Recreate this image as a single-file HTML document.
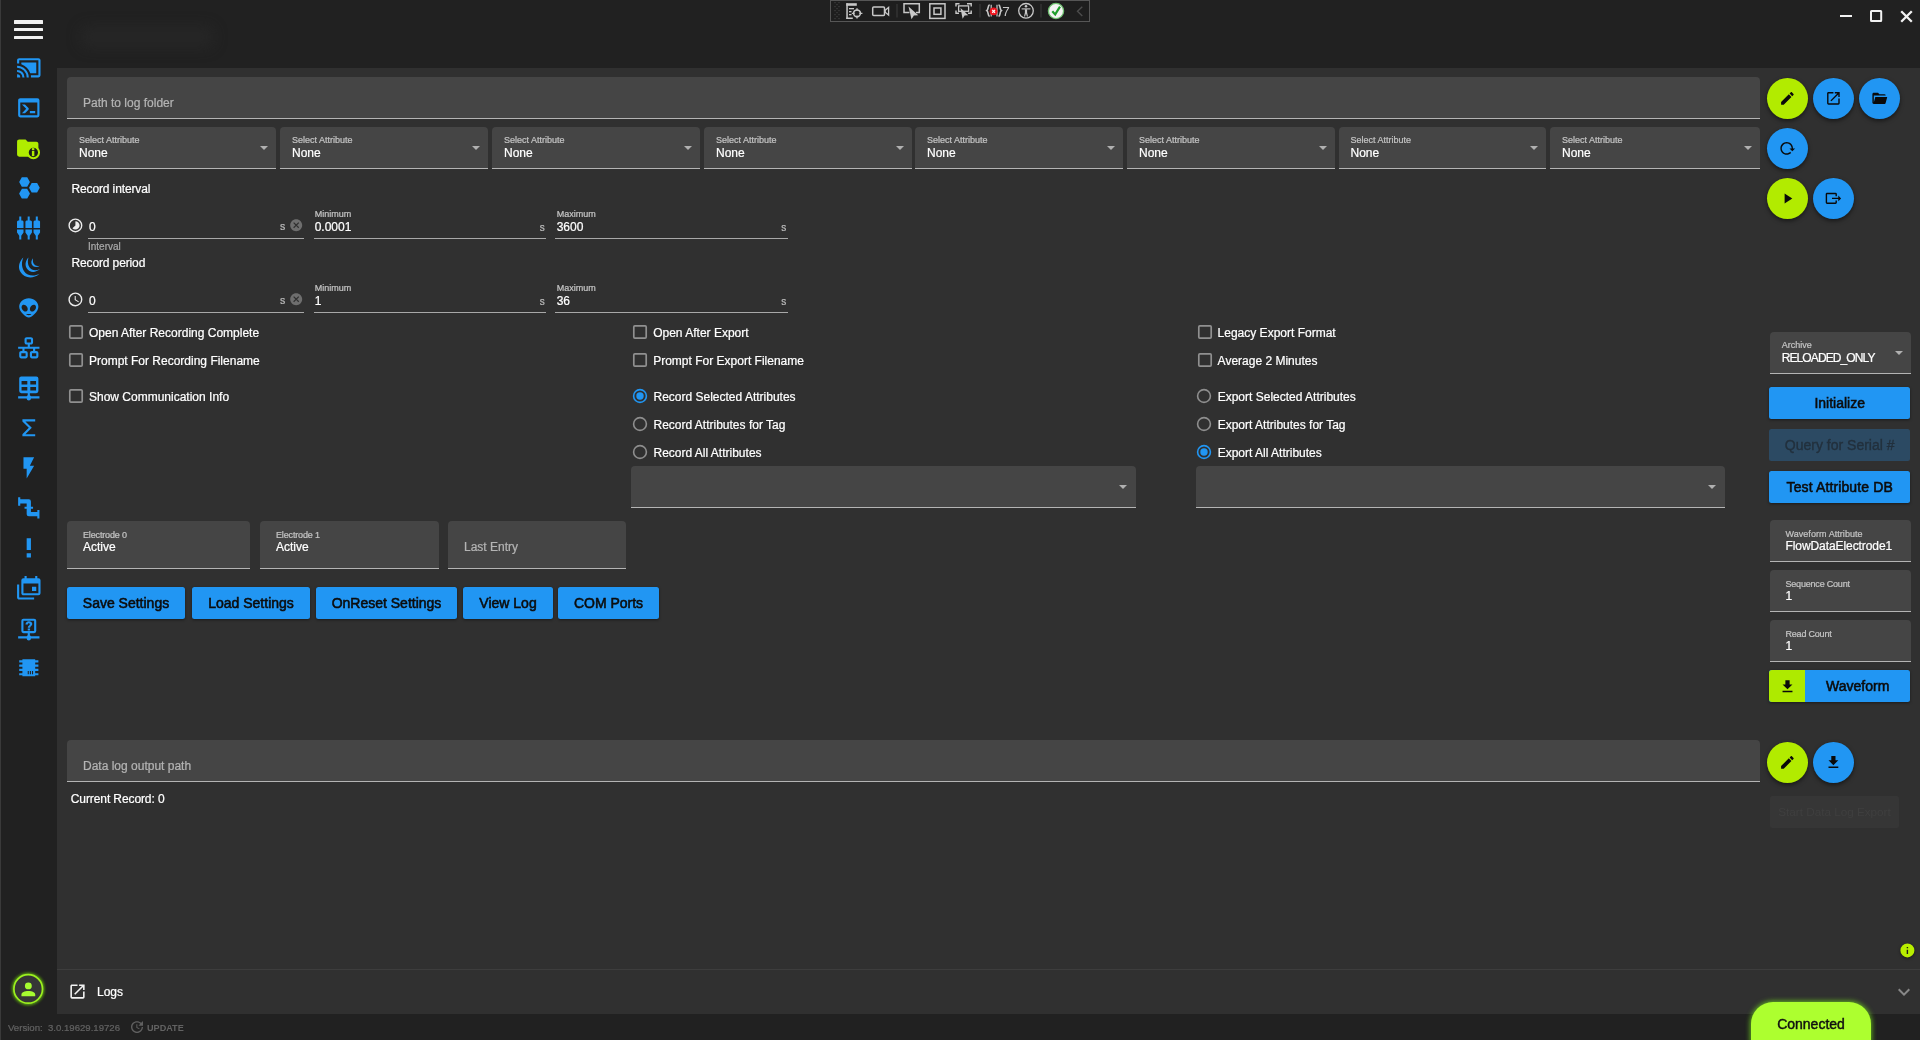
<!DOCTYPE html>
<html>
<head>
<meta charset="utf-8">
<title>Data Logger</title>
<style>
*{box-sizing:border-box;margin:0;padding:0}
html,body{width:1920px;height:1040px;overflow:hidden;background:#212121;font-family:"Liberation Sans",sans-serif;color:#fff}
body{position:relative}
.abs{position:absolute}
#leftstrip{position:absolute;left:0;top:0;width:1px;height:1040px;background:#3a3a3a}
#content{position:absolute;left:57px;top:68px;width:1863px;height:946px;background:#303030}
.fld{position:absolute;background:#454545;border-radius:4px 4px 0 0;border-bottom:1px solid #b4b4b4}
.t{position:absolute;white-space:nowrap;line-height:1;-webkit-text-stroke:0.22px currentColor}
.lbl{color:#c4c4c4;font-size:9px}
.val{color:#fff;font-size:12px}
.ph{color:#b4b4b4;font-size:12px}
.arrow{position:absolute;width:0;height:0;border-left:4px solid transparent;border-right:4px solid transparent;border-top:4px solid #b0b0b0}
.btn{position:absolute;background:#2196f3;border-radius:2.5px;color:#0c0c0c;font-size:14px;-webkit-text-stroke:0.55px #0c0c0c;text-align:center;height:32px;line-height:32px;box-shadow:0 1px 3px rgba(0,0,0,.45);white-space:nowrap}
.fab{position:absolute;width:41px;height:41px;border-radius:50%;box-shadow:0 2px 4px rgba(0,0,0,.5)}
.fab svg{position:absolute;left:12.1px;top:12.1px;width:16.8px;height:16.8px;fill:#0a0a0a}
.blue{background:#2196f3}
.lime{background:#b2eb00}
.cb{position:absolute;width:14px;height:14px;border:1.5px solid #8c8c8c;border-radius:2px}
.rb{position:absolute;width:14px;height:14px;border:1.5px solid #8c8c8c;border-radius:50%}
.rb.on{border-color:#2196f3}
.rb.on::after{content:"";position:absolute;left:2px;top:2px;width:7px;height:7px;border-radius:50%;background:#2196f3}
.ul{position:absolute;height:1px;background:#a8a8a8}
.sic{position:absolute;left:15.7px;width:25.6px;height:25.6px;fill:#2196f3}
</style>
</head>
<body>
<div id="wrap" style="position:absolute;left:0;top:0;width:1920px;height:1040px;will-change:transform;">
<div id="leftstrip"></div>
<div id="content"></div>
<!-- 10_sidebar.py -->
<div class="" style="position:absolute;left:14.3px;top:20.4px;width:28.4px;height:3.3px;background:#f0f0f0;border-radius:0.5px"></div>
<div class="" style="position:absolute;left:14.3px;top:28.2px;width:28.4px;height:3.3px;background:#f0f0f0;border-radius:0.5px"></div>
<div class="" style="position:absolute;left:14.3px;top:36.1px;width:28.4px;height:3.3px;background:#f0f0f0;border-radius:0.5px"></div>
<svg style="position:absolute;left:15.7px;top:55.2px;width:25.6px;height:25.6px" viewBox="0 0 24 24"><path fill="#2196f3" fill-rule="evenodd" d="M21,3H3C1.89,3 1,3.89 1,5V8H3V5H21V19H14V21H21A2,2 0 0,0 23,19V5C23,3.89 22.1,3 21,3M1,10V12A9,9 0 0,1 10,21H12C12,14.92 7.07,10 1,10M19,7H5V8.63C8.96,9.91 12.09,13.04 13.37,17H19M1,14V16A5,5 0 0,1 6,21H8A7,7 0 0,0 1,14M1,18V21H4A3,3 0 0,0 1,18Z"/></svg>
<svg style="position:absolute;left:15.7px;top:95.2px;width:25.6px;height:25.6px" viewBox="0 0 24 24"><path fill="#2196f3" fill-rule="evenodd" d="M20,19V7H4V19H20M20,3A2,2 0 0,1 22,5V19A2,2 0 0,1 20,21H4A2,2 0 0,1 2,19V5C2,3.89 2.9,3 4,3H20M13,17V15H18V17H13M9.58,13L5.57,9H8.4L11.7,12.3C12.09,12.69 12.09,13.33 11.7,13.72L8.42,17H5.59L9.58,13Z"/></svg>
<svg style="position:absolute;left:15.7px;top:135.2px;width:25.6px;height:25.6px" viewBox="0 0 24 24"><path fill="#b0ec00" transform="translate(-1,0.3)" d="M10,4H4C2.89,4 2,4.89 2,6V18A2,2 0 0,0 4,20H20A2,2 0 0,0 22,18V8C22,6.89 21.1,6 20,6H12L10,4Z"/><circle cx="16.3" cy="16.4" r="5.3" fill="#1c1c1c" stroke="#b0ec00" stroke-width="1.9"/><rect x="14.9" y="12.3" width="2.3" height="1.9" fill="#b0ec00"/><rect x="14.9" y="14.9" width="2.3" height="4.9" fill="#b0ec00"/></svg>
<svg style="position:absolute;left:15.7px;top:175.2px;width:25.6px;height:25.6px" viewBox="0 0 24 24"><path fill="#2196f3" fill-rule="evenodd" d="M10.25,2C10.44,2 10.61,2.11 10.69,2.26L12.91,6.22L13,6.5L12.91,6.78L10.69,10.74C10.61,10.89 10.44,11 10.25,11H5.75C5.56,11 5.39,10.89 5.31,10.74L3.09,6.78L3,6.5L3.09,6.22L5.31,2.26C5.39,2.11 5.56,2 5.75,2H10.25M10.25,13C10.44,13 10.61,13.11 10.69,13.26L12.91,17.22L13,17.5L12.91,17.78L10.69,21.74C10.61,21.89 10.44,22 10.25,22H5.75C5.56,22 5.39,21.89 5.31,21.74L3.09,17.78L3,17.5L3.09,17.22L5.31,13.26C5.39,13.11 5.56,13 5.75,13H10.25M19.5,7.5C19.69,7.5 19.86,7.61 19.94,7.76L22.16,11.72L22.25,12L22.16,12.28L19.94,16.24C19.86,16.39 19.69,16.5 19.5,16.5H15C14.81,16.5 14.64,16.39 14.56,16.24L12.34,12.28L12.25,12L12.34,11.72L14.56,7.76C14.64,7.61 14.81,7.5 15,7.5H19.5Z"/></svg>
<svg style="position:absolute;left:15.7px;top:215.2px;width:25.6px;height:25.6px" viewBox="0 0 24 24"><path fill="#2196f3" fill-rule="evenodd" d="M3.05,1.5H4.95V5.1H6.1L7.05,6.2V12.2H0.9500000000000002V6.2L1.9,5.1H3.05Z M0.9500000000000002,13.5H7.05V16.3L4.95,19.4V23H3.05V19.4L0.9500000000000002,16.3Z M10.950000000000001,1.5H12.85V5.1H14.0L14.95,6.2V12.2H8.850000000000001V6.2L9.8,5.1H10.950000000000001Z M8.850000000000001,13.5H14.95V16.3L12.85,19.4V23H10.950000000000001V19.4L8.850000000000001,16.3Z M18.55,1.5H20.45V5.1H21.6L22.55,6.2V12.2H16.45V6.2L17.4,5.1H18.55Z M16.45,13.5H22.55V16.3L20.45,19.4V23H18.55V19.4L16.45,16.3Z "/></svg>
<svg style="position:absolute;left:15.7px;top:255.2px;width:25.6px;height:25.6px" viewBox="0 0 24 24"><path fill="#2196f3" fill-rule="evenodd" d="M6.85,2.4C3.5,5.5 1.2,11 4.2,16C7.5,21.5 15.5,23.2 22.2,17.6C16.5,20.6 10.5,19.5 7.6,15.2C5,11.2 5.2,6.5 6.85,2.4Z M11.7,2.4C9.2,5 8,9 10,12.4C12.4,16.4 18,17.2 22.5,13.2C18.6,15.2 14.6,14.6 12.6,11.6C10.8,8.9 10.8,5.4 11.7,2.4Z M16,3C14.4,4.8 13.8,7.2 15,9.2C16.5,11.7 19.8,12 22.5,10C20.2,10.8 18,10.3 16.8,8.5C15.8,6.9 15.6,4.9 16,3Z"/></svg>
<svg style="position:absolute;left:15.7px;top:295.2px;width:25.6px;height:25.6px" viewBox="0 0 24 24"><path fill="#2196f3" fill-rule="evenodd" d="M12,3C16.97,3 21,6.58 21,11C21,15.42 15,21 12,21C9,21 3,15.42 3,11C3,6.58 7.03,3 12,3M10.31,10.93C9.29,9.29 7.47,8.58 6.25,9.34C5.03,10.1 4.87,12.05 5.89,13.69C6.92,15.33 8.74,16.04 9.96,15.28C11.18,14.5 11.33,12.57 10.31,10.93M13.69,10.93C12.67,12.57 12.82,14.5 14.04,15.28C15.26,16.04 17.08,15.33 18.11,13.69C19.13,12.05 18.97,10.1 17.75,9.34C16.53,8.58 14.71,9.29 13.69,10.93M12,17.75C10.62,17.75 9.5,18.03 9.5,18.38C9.5,18.72 10.62,19 12,19C13.38,19 14.5,18.72 14.5,18.38C14.5,18.03 13.38,17.75 12,17.75Z"/></svg>
<svg style="position:absolute;left:15.7px;top:335.2px;width:25.6px;height:25.6px" viewBox="0 0 24 24"><path fill="#2196f3" fill-rule="evenodd" d="M10,2C8.89,2 8,2.89 8,4V7C8,8.11 8.89,9 10,9H11V11H2V13H6V15H5C3.89,15 3,15.89 3,17V20C3,21.11 3.89,22 5,22H9C10.11,22 11,21.11 11,20V17C11,15.89 10.11,15 9,15H8V13H16V15H15C13.89,15 13,15.89 13,17V20C13,21.11 13.89,22 15,22H19C20.11,22 21,21.11 21,20V17C21,15.89 20.11,15 19,15H18V13H22V11H13V9H14C15.11,9 16,8.11 16,7V4C16,2.89 15.11,2 14,2H10M10,4H14V7H10V4M5,17H9V20H5V17M15,17H19V20H15V17Z"/></svg>
<svg style="position:absolute;left:15.7px;top:375.2px;width:25.6px;height:25.6px" viewBox="0 0 24 24"><path fill="#2196f3" fill-rule="evenodd" d="M5,1.3H19A2,2 0 0,1 21,3.3V15A2,2 0 0,1 19,17H13V19A2,2 0 0,1 14,20H22V22H14A2,2 0 0,1 10,22H2V20H10A2,2 0 0,1 11,19V17H5A2,2 0 0,1 3,15V3.3A2,2 0 0,1 5,1.3ZM5.2,5.6V8.8H10.6V5.6Z M13.4,5.6V8.8H18.8V5.6Z M5.2,11.3V14.5H10.6V11.3Z M13.4,11.3V14.5H18.8V11.3Z"/></svg>
<svg style="position:absolute;left:15.7px;top:415.2px;width:25.6px;height:25.6px" viewBox="0 0 24 24"><path fill="#2196f3" fill-rule="evenodd" d="M18,6H8.83L14.83,12L8.83,18H18V20H6V18L12,12L6,6V4H18V6Z"/></svg>
<svg style="position:absolute;left:15.7px;top:455.2px;width:25.6px;height:25.6px" viewBox="0 0 24 24"><path fill="#2196f3" fill-rule="evenodd" d="M7,2V13H10V22L17,10H13L17,2H7Z"/></svg>
<svg style="position:absolute;left:15.7px;top:495.2px;width:25.6px;height:25.6px" viewBox="0 0 24 24"><path fill="#2196f3" fill-rule="evenodd" d="M22,14H20V16H14V13H16V11H14V6A2,2 0 0,0 12,4H4V2H2V10H4V8H10V11H8V13H10V18A2,2 0 0,0 12,20H20V22H22Z"/></svg>
<svg style="position:absolute;left:15.7px;top:535.2px;width:25.6px;height:25.6px" viewBox="0 0 24 24"><path fill="#2196f3" fill-rule="evenodd" d="M10,3H14V14H10V3M10,21V17H14V21H10Z"/></svg>
<svg style="position:absolute;left:15.7px;top:575.2px;width:25.6px;height:25.6px" viewBox="0 0 24 24"><path fill="#2196f3" fill-rule="evenodd" d="M21,17V8H7V17H21M21,3A2,2 0 0,1 23,5V17A2,2 0 0,1 21,19H7C5.89,19 5,18.1 5,17V5A2,2 0 0,1 7,3H8V1H10V3H18V1H20V3H21M3,21H17V23H3C1.89,23 1,22.1 1,21V9H3V21M19,15H15V11H19V15Z"/></svg>
<svg style="position:absolute;left:15.7px;top:615.2px;width:25.6px;height:25.6px" viewBox="0 0 24 24"><path fill="#2196f3" fill-rule="evenodd" d="M7,3.5H17A2,2 0 0,1 19,5.5V15A2,2 0 0,1 17,17H13V19A2,2 0 0,1 14,20H22V22H14A2,2 0 0,1 10,22H2V20H10A2,2 0 0,1 11,19V17H7A2,2 0 0,1 5,15V5.5A2,2 0 0,1 7,3.5Z M7,5.5V15H17V5.5Z M11,12.7H13.2V14.6H11Z M12.1,5.9C14,5.9 15.3,7 15.3,8.5C15.3,10.2 13.2,10.5 13.2,12H11C11,9.8 13,9.7 13,8.6C13,8.1 12.6,7.8 12.1,7.8C11.5,7.8 11.1,8.2 11.1,8.9H8.9C8.9,7.1 10.2,5.9 12.1,5.9Z"/></svg>
<svg style="position:absolute;left:15.7px;top:655.2px;width:25.6px;height:25.6px" viewBox="0 0 24 24"><path fill="#2196f3" fill-rule="evenodd" d="M6,4H18V5H21V7H18V9H21V11H18V13H21V15H18V17H21V19H18V20H6V19H3V17H6V15H3V13H6V11H3V9H6V7H3V5H6V4M11,15V18H12V15H11M13,15V18H14V15H13M15,15V18H16V15H15Z"/></svg>
<svg style="position:absolute;left:8px;top:969px;width:40px;height:40px;overflow:visible" viewBox="0 0 40 40"><defs><filter id="gl" x="-50%" y="-50%" width="200%" height="200%"><feGaussianBlur stdDeviation="1.6"/></filter></defs><circle cx="20.2" cy="19.9" r="14.4" fill="none" stroke="#6fd010" stroke-width="3.2" filter="url(#gl)" opacity="0.85"/><circle cx="20.2" cy="19.9" r="14.3" fill="#363636" stroke="#9cf01e" stroke-width="1.7"/></svg>
<svg style="position:absolute;left:17.65px;top:978.6px;width:20.7px;height:20.7px;" viewBox="0 0 24 24"><path fill="#a6fb30" d="M12,4A4,4 0 0,1 16,8A4,4 0 0,1 12,12A4,4 0 0,1 8,8A4,4 0 0,1 12,4M12,14C16.42,14 20,15.79 20,18V20H4V18C4,15.79 7.58,14 12,14Z"/></svg>
<div class="t" style="top:1022.67px;font-size:9.6px;color:#626262;left:8px;white-space:pre;">Version:  3.0.19629.19726</div>
<svg style="position:absolute;left:129.3px;top:1019.2px;width:16px;height:16px;" viewBox="0 0 24 24"><path fill="#606060" d="M21,10.12H14.22L16.96,7.3C14.23,4.6 9.81,4.5 7.08,7.2C4.35,9.91 4.35,14.28 7.08,17C9.81,19.7 14.23,19.7 16.96,17C18.32,15.65 19,14.08 19,12.1H21C21,14.08 20.12,16.65 18.36,18.39C14.85,21.87 9.15,21.87 5.64,18.39C2.14,14.92 2.11,9.28 5.62,5.81C9.13,2.34 14.76,2.34 18.27,5.81L21,3V10.12M12.5,8V12.25L16,14.33L15.28,15.54L11,13V8H12.5Z"/></svg>
<div class="t" style="top:1023.90px;font-size:9.1px;color:#626262;font-weight:bold;left:147px;-webkit-text-stroke:0;">UPDATE</div>
<!-- 15_topbar.py -->
<div style="position:absolute;left:80px;top:26px;width:134px;height:22px;background:#2a2a2a;filter:blur(7px);border-radius:8px;opacity:.6"></div>
<div class="" style="position:absolute;left:1840px;top:15.2px;width:12.3px;height:2.1px;background:#f2f2f2"></div>
<svg style="position:absolute;left:1868px;top:8px;width:16px;height:16px" viewBox="0 0 16 16"><rect x="3" y="2.9" width="10.2" height="10.2" rx="0.5" fill="none" stroke="#f2f2f2" stroke-width="2"/></svg>
<svg style="position:absolute;left:1899.5px;top:10px;width:13px;height:13px" viewBox="0 0 13 13"><path d="M1.2,1.2L11.8,11.8M11.8,1.2L1.2,11.8" stroke="#f2f2f2" stroke-width="2.3" fill="none"/></svg>
<svg style="position:absolute;left:830px;top:0;width:260px;height:23px" viewBox="0 0 260 23">
<rect x="0.5" y="0.5" width="259" height="21" fill="#1e1e1e" stroke="#565656" stroke-width="1"/>
<g fill="#424242"><rect x="4.4" y="2.0" width="1.2" height="1.2"/><rect x="8.4" y="2.0" width="1.2" height="1.2"/><rect x="4.4" y="6.0" width="1.2" height="1.2"/><rect x="8.4" y="6.0" width="1.2" height="1.2"/><rect x="4.4" y="10.0" width="1.2" height="1.2"/><rect x="8.4" y="10.0" width="1.2" height="1.2"/><rect x="4.4" y="14.0" width="1.2" height="1.2"/><rect x="8.4" y="14.0" width="1.2" height="1.2"/><rect x="4.4" y="18.0" width="1.2" height="1.2"/><rect x="8.4" y="18.0" width="1.2" height="1.2"/><rect x="6.4" y="4.0" width="1.2" height="1.2"/><rect x="6.4" y="8.0" width="1.2" height="1.2"/><rect x="6.4" y="12.0" width="1.2" height="1.2"/><rect x="6.4" y="16.0" width="1.2" height="1.2"/></g>
<!-- icon1 live visual tree -->
<g fill="#c8c8c8">
<rect x="16.3" y="3.2" width="10.5" height="2.6"/>
<rect x="16.3" y="3.2" width="1.5" height="15.8"/>
<rect x="16.3" y="17.5" width="6.5" height="1.5"/>
<rect x="19" y="8" width="5" height="1.3"/>
<rect x="19" y="11" width="2.5" height="1.3"/>
<rect x="19" y="14" width="2.5" height="1.3"/>
</g>
<circle cx="27" cy="13.3" r="3.4" fill="none" stroke="#c8c8c8" stroke-width="1.5"/>
<path d="M27,8.2V11M27,15.6V18.6M21.8,13.3H24.6M29.4,13.3H32.4" stroke="#c8c8c8" stroke-width="1.3"/>
<!-- icon2 camera -->
<rect x="42.7" y="6.9" width="11.8" height="8.6" rx="1" fill="none" stroke="#c8c8c8" stroke-width="1.5"/>
<path d="M55.2,10.2L58.6,7.4V15L55.2,12.2Z" fill="none" stroke="#c8c8c8" stroke-width="1.3"/>
<rect x="66.5" y="4" width="1" height="13.5" fill="#3c3c3c"/>
<!-- icon3 select element -->
<path d="M79.5,12.5H74V3.7H89.3V12.5H86" fill="none" stroke="#c8c8c8" stroke-width="1.5"/>
<path d="M78.5,6.5L88.3,15.3L83.9,15.5L81.5,19.2Z" fill="#c8c8c8"/>
<!-- icon4 -->
<rect x="99.8" y="3.8" width="15.2" height="14.6" fill="none" stroke="#c8c8c8" stroke-width="1.5"/>
<rect x="104" y="8" width="6.9" height="6.3" fill="none" stroke="#c8c8c8" stroke-width="1.5"/>
<!-- icon5 dashed rect w cursor -->
<path d="M126,6.5V3.8H129.5M137,3.8H141.2V6.5M141.2,10.5V13.3H138M129,13.3H126V10.5" fill="none" stroke="#c8c8c8" stroke-width="1.4"/>
<rect x="128.6" y="5.9" width="10" height="5.4" fill="none" stroke="#c8c8c8" stroke-width="1.3"/>
<path d="M130.5,8L138.3,15.2L134.6,15.4L132.6,18.8Z" fill="#c8c8c8"/>
<rect x="149.5" y="4" width="1" height="13.5" fill="#3c3c3c"/>
<!-- icon6 braces + red -->
<path d="M159.6,4.8C157.4,5.6 158.8,9.2 156.8,10.6C158.8,12 157.4,15.6 159.6,16.4M168.6,4.8C170.8,5.6 169.4,9.2 171.4,10.6C169.4,12 170.8,15.6 168.6,16.4" fill="none" stroke="#c8c8c8" stroke-width="1.6"/>
<path d="M161.2,4.8V16.4M167,4.8V16.4" stroke="#c8c8c8" stroke-width="1.2"/>
<circle cx="163.6" cy="11.3" r="3.9" fill="#f0141e"/>
<path d="M162.2,9.9L165,12.7M165,9.9L162.2,12.7" stroke="#fff" stroke-width="1.3"/>
<text x="172.3" y="15.8" font-family="Liberation Sans, sans-serif" font-size="13.5" fill="#c8c8c8">7</text>
<!-- icon7 accessibility -->
<circle cx="196" cy="10.8" r="7.3" fill="none" stroke="#c8c8c8" stroke-width="1.3"/>
<circle cx="196" cy="6.3" r="1.25" fill="#c8c8c8"/>
<path d="M191.6,8.9H200.4" stroke="#c8c8c8" stroke-width="1.1"/><path d="M194.9,9.2H197.1V12.6L198,16.6H196.9L196,13.4L195.1,16.6H194L194.9,12.6Z" fill="#c8c8c8"/>
<rect x="210.5" y="4" width="1" height="13.5" fill="#3c3c3c"/>
<!-- icon8 green check -->
<circle cx="226" cy="11" r="7.6" fill="#f4f4f4" stroke="#6fc070" stroke-width="1.3"/>
<path d="M222.3,11.2L225.2,14.4L230,6.6" fill="none" stroke="#1f9e2c" stroke-width="2.2"/>
<path d="M252.3,6.7L247.5,11.3L252.3,15.9" fill="none" stroke="#4c4c4c" stroke-width="1.4"/>
</svg>
<!-- 20_main.py -->
<div class="fld" style="position:absolute;left:67px;top:77px;width:1693px;height:42px;"></div>
<div class="t" style="top:96.84px;font-size:12px;color:#b4b4b4;left:83px;">Path to log folder</div>
<div class="fld" style="position:absolute;left:67px;top:127px;width:209px;height:42px;"></div>
<div class="t" style="top:135.58px;font-size:9px;color:#c4c4c4;left:79px;">Select Attribute</div>
<div class="t" style="top:146.84px;font-size:12px;color:#fff;left:79px;">None</div>
<div class="arrow" style="position:absolute;left:260px;top:146px;width:0px;height:0px;"></div>
<div class="fld" style="position:absolute;left:280px;top:127px;width:208px;height:42px;"></div>
<div class="t" style="top:135.58px;font-size:9px;color:#c4c4c4;left:292px;">Select Attribute</div>
<div class="t" style="top:146.84px;font-size:12px;color:#fff;left:292px;">None</div>
<div class="arrow" style="position:absolute;left:472px;top:146px;width:0px;height:0px;"></div>
<div class="fld" style="position:absolute;left:492px;top:127px;width:208px;height:42px;"></div>
<div class="t" style="top:135.58px;font-size:9px;color:#c4c4c4;left:504px;">Select Attribute</div>
<div class="t" style="top:146.84px;font-size:12px;color:#fff;left:504px;">None</div>
<div class="arrow" style="position:absolute;left:684px;top:146px;width:0px;height:0px;"></div>
<div class="fld" style="position:absolute;left:704px;top:127px;width:208px;height:42px;"></div>
<div class="t" style="top:135.58px;font-size:9px;color:#c4c4c4;left:716px;">Select Attribute</div>
<div class="t" style="top:146.84px;font-size:12px;color:#fff;left:716px;">None</div>
<div class="arrow" style="position:absolute;left:896px;top:146px;width:0px;height:0px;"></div>
<div class="fld" style="position:absolute;left:915px;top:127px;width:208px;height:42px;"></div>
<div class="t" style="top:135.58px;font-size:9px;color:#c4c4c4;left:927px;">Select Attribute</div>
<div class="t" style="top:146.84px;font-size:12px;color:#fff;left:927px;">None</div>
<div class="arrow" style="position:absolute;left:1107px;top:146px;width:0px;height:0px;"></div>
<div class="fld" style="position:absolute;left:1127px;top:127px;width:208px;height:42px;"></div>
<div class="t" style="top:135.58px;font-size:9px;color:#c4c4c4;left:1139px;">Select Attribute</div>
<div class="t" style="top:146.84px;font-size:12px;color:#fff;left:1139px;">None</div>
<div class="arrow" style="position:absolute;left:1319px;top:146px;width:0px;height:0px;"></div>
<div class="fld" style="position:absolute;left:1338.5px;top:127px;width:207.5px;height:42px;"></div>
<div class="t" style="top:135.58px;font-size:9px;color:#c4c4c4;left:1350.5px;">Select Attribute</div>
<div class="t" style="top:146.84px;font-size:12px;color:#fff;left:1350.5px;">None</div>
<div class="arrow" style="position:absolute;left:1530px;top:146px;width:0px;height:0px;"></div>
<div class="fld" style="position:absolute;left:1550px;top:127px;width:210px;height:42px;"></div>
<div class="t" style="top:135.58px;font-size:9px;color:#c4c4c4;left:1562px;">Select Attribute</div>
<div class="t" style="top:146.84px;font-size:12px;color:#fff;left:1562px;">None</div>
<div class="arrow" style="position:absolute;left:1744px;top:146px;width:0px;height:0px;"></div>
<div class="t" style="top:182.84px;font-size:12px;color:#fff;left:71.5px;letter-spacing:-0.13px;">Record interval</div>
<div class="t" style="top:257.04px;font-size:12px;color:#fff;left:71.5px;letter-spacing:-0.13px;">Record period</div>
<svg style="position:absolute;left:66.6px;top:217.2px;width:16.8px;height:16.8px;" viewBox="0 0 24 24"><path fill="#ececec" d="M16.24,7.76C15.07,6.58 13.53,6 12,6V12L7.76,16.24C10.1,18.58 13.9,18.58 16.24,16.24C18.59,13.9 18.59,10.1 16.24,7.76M12,2A10,10 0 0,0 2,12A10,10 0 0,0 12,22A10,10 0 0,0 22,12A10,10 0 0,0 12,2M12,20A8,8 0 0,1 4,12A8,8 0 0,1 12,4A8,8 0 0,1 20,12A8,8 0 0,1 12,20Z"/></svg>
<div class="t" style="top:221.14px;font-size:12px;color:#fff;left:89px;">0</div>
<div class="t" style="top:220.91px;font-size:10.5px;color:#bdbdbd;left:280px;">s</div>
<svg style="position:absolute;left:288.7px;top:218.4px;width:14.4px;height:14.4px;" viewBox="0 0 24 24"><path fill="#6e6e6e" d="M12,2C17.53,2 22,6.47 22,12C22,17.53 17.53,22 12,22C6.47,22 2,17.53 2,12C2,6.47 6.47,2 12,2M15.59,7L12,10.59L8.41,7L7,8.41L10.59,12L7,15.59L8.41,17L12,13.41L15.59,17L17,15.59L13.41,12L17,8.41L15.59,7Z"/></svg>
<div class="ul" style="position:absolute;left:88px;top:238px;width:216px;height:1px;"></div>
<div class="t" style="top:209.68px;font-size:9px;color:#c4c4c4;left:314.7px;">Minimum</div>
<div class="t" style="top:221.04px;font-size:12px;color:#fff;left:314.7px;">0.0001</div>
<div class="t" style="top:222.53px;font-size:10px;color:#bdbdbd;left:539.8px;">s</div>
<div class="ul" style="position:absolute;left:314px;top:238px;width:232px;height:1px;"></div>
<div class="t" style="top:209.68px;font-size:9px;color:#c4c4c4;left:556.7px;">Maximum</div>
<div class="t" style="top:221.04px;font-size:12px;color:#fff;left:556.7px;">3600</div>
<div class="t" style="top:222.53px;font-size:10px;color:#bdbdbd;left:781.2px;">s</div>
<div class="ul" style="position:absolute;left:555px;top:238px;width:233px;height:1px;"></div>
<svg style="position:absolute;left:66.6px;top:291.2px;width:16.8px;height:16.8px;" viewBox="0 0 24 24"><path fill="#ececec" d="M12,20A8,8 0 0,0 20,12A8,8 0 0,0 12,4A8,8 0 0,0 4,12A8,8 0 0,0 12,20M12,2A10,10 0 0,1 22,12A10,10 0 0,1 12,22C6.47,22 2,17.5 2,12A10,10 0 0,1 12,2M12.5,7V12.25L17,14.92L16.25,16.15L11,13V7H12.5Z"/></svg>
<div class="t" style="top:295.14px;font-size:12px;color:#fff;left:89px;">0</div>
<div class="t" style="top:294.91px;font-size:10.5px;color:#bdbdbd;left:280px;">s</div>
<svg style="position:absolute;left:288.7px;top:292.4px;width:14.4px;height:14.4px;" viewBox="0 0 24 24"><path fill="#6e6e6e" d="M12,2C17.53,2 22,6.47 22,12C22,17.53 17.53,22 12,22C6.47,22 2,17.53 2,12C2,6.47 6.47,2 12,2M15.59,7L12,10.59L8.41,7L7,8.41L10.59,12L7,15.59L8.41,17L12,13.41L15.59,17L17,15.59L13.41,12L17,8.41L15.59,7Z"/></svg>
<div class="ul" style="position:absolute;left:88px;top:312px;width:216px;height:1px;"></div>
<div class="t" style="top:283.68px;font-size:9px;color:#c4c4c4;left:314.7px;">Minimum</div>
<div class="t" style="top:295.04px;font-size:12px;color:#fff;left:314.7px;">1</div>
<div class="t" style="top:296.54px;font-size:10px;color:#bdbdbd;left:539.8px;">s</div>
<div class="ul" style="position:absolute;left:314px;top:312px;width:232px;height:1px;"></div>
<div class="t" style="top:283.68px;font-size:9px;color:#c4c4c4;left:556.7px;">Maximum</div>
<div class="t" style="top:295.04px;font-size:12px;color:#fff;left:556.7px;">36</div>
<div class="t" style="top:296.54px;font-size:10px;color:#bdbdbd;left:781.2px;">s</div>
<div class="ul" style="position:absolute;left:555px;top:312px;width:233px;height:1px;"></div>
<div class="t" style="top:242.13px;font-size:10px;color:#a8a8a8;left:88px;">Interval</div>
<svg style="position:absolute;left:68px;top:324px;width:16px;height:16px" viewBox="0 0 16 16"><rect x="1.8" y="1.8" width="12.4" height="12.4" rx="1.1" fill="none" stroke="#909090" stroke-width="1.7"/></svg>
<div class="t" style="top:327.04px;font-size:12px;color:#fff;left:89px;">Open After Recording Complete</div>
<svg style="position:absolute;left:68px;top:352px;width:16px;height:16px" viewBox="0 0 16 16"><rect x="1.8" y="1.8" width="12.4" height="12.4" rx="1.1" fill="none" stroke="#909090" stroke-width="1.7"/></svg>
<div class="t" style="top:355.04px;font-size:12px;color:#fff;left:89px;">Prompt For Recording Filename</div>
<svg style="position:absolute;left:68px;top:388px;width:16px;height:16px" viewBox="0 0 16 16"><rect x="1.8" y="1.8" width="12.4" height="12.4" rx="1.1" fill="none" stroke="#909090" stroke-width="1.7"/></svg>
<div class="t" style="top:391.04px;font-size:12px;color:#fff;left:89px;">Show Communication Info</div>
<svg style="position:absolute;left:632.2px;top:324px;width:16px;height:16px" viewBox="0 0 16 16"><rect x="1.8" y="1.8" width="12.4" height="12.4" rx="1.1" fill="none" stroke="#909090" stroke-width="1.7"/></svg>
<div class="t" style="top:327.04px;font-size:12px;color:#fff;left:653.2px;">Open After Export</div>
<svg style="position:absolute;left:632.2px;top:352px;width:16px;height:16px" viewBox="0 0 16 16"><rect x="1.8" y="1.8" width="12.4" height="12.4" rx="1.1" fill="none" stroke="#909090" stroke-width="1.7"/></svg>
<div class="t" style="top:355.04px;font-size:12px;color:#fff;left:653.2px;">Prompt For Export Filename</div>
<svg style="position:absolute;left:632px;top:388px;width:16px;height:16px" viewBox="0 0 16 16"><circle cx="8" cy="8" r="6.4" fill="none" stroke="#2196f3" stroke-width="1.6"/><circle cx="8" cy="8" r="3.7" fill="#2196f3"/></svg>
<div class="t" style="top:391.04px;font-size:12px;color:#fff;left:653.5px;">Record Selected Attributes</div>
<svg style="position:absolute;left:632px;top:416px;width:16px;height:16px" viewBox="0 0 16 16"><circle cx="8" cy="8" r="6.4" fill="none" stroke="#8e8e8e" stroke-width="1.6"/></svg>
<div class="t" style="top:419.04px;font-size:12px;color:#fff;left:653.5px;">Record Attributes for Tag</div>
<svg style="position:absolute;left:632px;top:444px;width:16px;height:16px" viewBox="0 0 16 16"><circle cx="8" cy="8" r="6.4" fill="none" stroke="#8e8e8e" stroke-width="1.6"/></svg>
<div class="t" style="top:447.04px;font-size:12px;color:#fff;left:653.5px;">Record All Attributes</div>
<svg style="position:absolute;left:1196.6px;top:324px;width:16px;height:16px" viewBox="0 0 16 16"><rect x="1.8" y="1.8" width="12.4" height="12.4" rx="1.1" fill="none" stroke="#909090" stroke-width="1.7"/></svg>
<div class="t" style="top:327.04px;font-size:12px;color:#fff;left:1217.6px;">Legacy Export Format</div>
<svg style="position:absolute;left:1196.6px;top:352px;width:16px;height:16px" viewBox="0 0 16 16"><rect x="1.8" y="1.8" width="12.4" height="12.4" rx="1.1" fill="none" stroke="#909090" stroke-width="1.7"/></svg>
<div class="t" style="top:355.04px;font-size:12px;color:#fff;left:1217.6px;">Average 2 Minutes</div>
<svg style="position:absolute;left:1196.2px;top:388px;width:16px;height:16px" viewBox="0 0 16 16"><circle cx="8" cy="8" r="6.4" fill="none" stroke="#8e8e8e" stroke-width="1.6"/></svg>
<div class="t" style="top:391.04px;font-size:12px;color:#fff;left:1217.7px;">Export Selected Attributes</div>
<svg style="position:absolute;left:1196.2px;top:416px;width:16px;height:16px" viewBox="0 0 16 16"><circle cx="8" cy="8" r="6.4" fill="none" stroke="#8e8e8e" stroke-width="1.6"/></svg>
<div class="t" style="top:419.04px;font-size:12px;color:#fff;left:1217.7px;">Export Attributes for Tag</div>
<svg style="position:absolute;left:1196.2px;top:444px;width:16px;height:16px" viewBox="0 0 16 16"><circle cx="8" cy="8" r="6.4" fill="none" stroke="#2196f3" stroke-width="1.6"/><circle cx="8" cy="8" r="3.7" fill="#2196f3"/></svg>
<div class="t" style="top:447.04px;font-size:12px;color:#fff;left:1217.7px;">Export All Attributes</div>
<div class="fld" style="position:absolute;left:631px;top:466px;width:505px;height:42px;"></div>
<div class="arrow" style="position:absolute;left:1119px;top:485px;width:0px;height:0px;"></div>
<div class="fld" style="position:absolute;left:1196px;top:466px;width:529px;height:42px;"></div>
<div class="arrow" style="position:absolute;left:1708px;top:485px;width:0px;height:0px;"></div>
<div class="fld" style="position:absolute;left:67px;top:521px;width:183px;height:48px;"></div>
<div class="t" style="top:530.88px;font-size:9px;color:#c4c4c4;left:83px;letter-spacing:-0.15px;">Electrode 0</div>
<div class="t" style="top:540.84px;font-size:12px;color:#fff;left:83px;">Active</div>
<div class="fld" style="position:absolute;left:260px;top:521px;width:178.5px;height:48px;"></div>
<div class="t" style="top:530.88px;font-size:9px;color:#c4c4c4;left:276px;letter-spacing:-0.15px;">Electrode 1</div>
<div class="t" style="top:540.84px;font-size:12px;color:#fff;left:276px;">Active</div>
<div class="fld" style="position:absolute;left:448px;top:521px;width:178.4px;height:48px;"></div>
<div class="t" style="top:540.84px;font-size:12px;color:#b4b4b4;left:464px;">Last Entry</div>
<div class="btn" style="left:67px;top:587px;width:118px;">Save Settings</div>
<div class="btn" style="left:192px;top:587px;width:118px;">Load Settings</div>
<div class="btn" style="left:316px;top:587px;width:141px;">OnReset Settings</div>
<div class="btn" style="left:463px;top:587px;width:90px;">View Log</div>
<div class="btn" style="left:558px;top:587px;width:101px;">COM Ports</div>
<div class="fld" style="position:absolute;left:67px;top:740px;width:1693px;height:42px;"></div>
<div class="t" style="top:760.44px;font-size:12px;color:#b4b4b4;left:83px;">Data log output path</div>
<div class="t" style="top:793.34px;font-size:12px;color:#fff;left:70.8px;letter-spacing:-0.1px;">Current Record: 0</div>
<!-- 30_right.py -->
<div class="fab lime" style="left:1766.8px;top:77.5px"><svg viewBox="0 0 24 24"><path d="M20.71,7.04C21.1,6.65 21.1,6 20.71,5.63L18.37,3.29C18,2.9 17.35,2.9 16.96,3.29L15.12,5.12L18.87,8.87M3,17.25V21H6.75L17.81,9.93L14.06,6.18L3,17.25Z"/></svg></div>
<div class="fab blue" style="left:1812.9px;top:77.5px"><svg viewBox="0 0 24 24"><path d="M14,3V5H17.59L7.76,14.83L9.17,16.24L19,6.41V10H21V3M19,19H5V5H12V3H5C3.89,3 3,3.9 3,5V19A2,2 0 0,0 5,21H19A2,2 0 0,0 21,19V12H19V19Z"/></svg></div>
<div class="fab blue" style="left:1858.9px;top:77.5px"><svg viewBox="0 0 24 24"><path d="M19,20H4C2.89,20 2,19.1 2,18V6C2,4.89 2.89,4 4,4H10L12,6H19A2,2 0 0,1 21,8H21L4,8V18L6.14,10H23.21L20.93,18.5C20.7,19.37 19.92,20 19,20Z"/></svg></div>
<div class="fab blue" style="left:1766.8px;top:127.5px"><svg viewBox="0 0 24 24"><path d="M2 12C2 16.97 6.03 21 11 21C13.39 21 15.68 20.06 17.4 18.4L15.9 16.9C14.63 18.25 12.86 19 11 19C4.76 19 1.64 11.46 6.05 7.05C10.46 2.64 18 5.77 18 12H15L19 16H19.1L23 12H20C20 7.03 15.97 3 11 3C6.03 3 2 7.03 2 12Z"/></svg></div>
<div class="fab lime" style="left:1766.8px;top:177.5px"><svg viewBox="0 0 24 24"><path d="M8,5.14V19.14L19,12.14L8,5.14Z"/></svg></div>
<div class="fab blue" style="left:1812.9px;top:177.5px"><svg viewBox="0 0 24 24"><path d="M23,12L19,8V11H10V13H19V16M1,18V6C1,4.89 1.9,4 3,4H15A2,2 0 0,1 17,6V9H15V6H3V18H15V15H17V18A2,2 0 0,1 15,20H3A2,2 0 0,1 1,18Z"/></svg></div>
<div class="fld" style="position:absolute;left:1770px;top:332px;width:141px;height:42px;"></div>
<div class="t" style="top:340.78px;font-size:9px;color:#c4c4c4;left:1781.7px;">Archive</div>
<div class="t" style="top:351.64px;font-size:12px;color:#fff;left:1781.7px;letter-spacing:-0.89px;">RELOADED_ONLY</div>
<div class="arrow" style="position:absolute;left:1895.3px;top:351px;width:0px;height:0px;"></div>
<div class="btn" style="left:1769px;top:387px;width:141.4000000000001px;">Initialize</div>
<div class="btn" style="left:1769px;top:429px;width:141.4000000000001px;background:#2c4a63;color:#22303d;box-shadow:none;-webkit-text-stroke:0.35px #22303d;">Query for Serial #</div>
<div class="btn" style="left:1769px;top:471px;width:141.4000000000001px;letter-spacing:0.12px;">Test Attribute DB</div>
<div class="fld" style="position:absolute;left:1770px;top:520px;width:141px;height:42px;"></div>
<div class="t" style="top:529.58px;font-size:9px;color:#c4c4c4;left:1785.5px;letter-spacing:0.05px;">Waveform Attribute</div>
<div class="t" style="top:539.84px;font-size:12px;color:#fff;left:1785.5px;letter-spacing:-0.08px;">FlowDataElectrode1</div>
<div class="fld" style="position:absolute;left:1770px;top:570px;width:141px;height:42px;"></div>
<div class="t" style="top:579.58px;font-size:9px;color:#c4c4c4;left:1785.5px;letter-spacing:-0.2px;">Sequence Count</div>
<div class="t" style="top:589.84px;font-size:12px;color:#fff;left:1785.5px;">1</div>
<div class="fld" style="position:absolute;left:1770px;top:620px;width:141px;height:42px;"></div>
<div class="t" style="top:629.58px;font-size:9px;color:#c4c4c4;left:1785.5px;letter-spacing:-0.2px;">Read Count</div>
<div class="t" style="top:639.84px;font-size:12px;color:#fff;left:1785.5px;">1</div>
<div class="btn" style="left:1769px;top:670px;width:141.4px;padding-left:36px">Waveform<div style="position:absolute;left:0;top:0;width:36px;height:32px;background:#aeea00;border-radius:3px 0 0 3px"><svg viewBox="0 0 24 24" style="position:absolute;left:9.6px;top:7.7px;width:17px;height:17px"><path fill="#0a0a0a" d="M5,20H19V18H5M19,9H15V3H9V9H5L12,16L19,9Z"/></svg></div></div>
<div class="fab lime" style="left:1766.8px;top:741.5px"><svg viewBox="0 0 24 24"><path d="M20.71,7.04C21.1,6.65 21.1,6 20.71,5.63L18.37,3.29C18,2.9 17.35,2.9 16.96,3.29L15.12,5.12L18.87,8.87M3,17.25V21H6.75L17.81,9.93L14.06,6.18L3,17.25Z"/></svg></div>
<div class="fab blue" style="left:1812.9px;top:741.5px"><svg viewBox="0 0 24 24"><path d="M5,20H19V18H5M19,9H15V3H9V9H5L12,16L19,9Z"/></svg></div>
<div class="btn" style="left:1770px;top:796px;width:129px;background:#363636;color:#3f3f3f;box-shadow:none;-webkit-text-stroke:0;font-size:11.7px;">Start Data Log Export</div>
<!-- 40_bottom.py -->
<div class="" style="position:absolute;left:57px;top:969px;width:1863px;height:1px;background:#3d3d3d"></div>
<svg style="position:absolute;left:67.5px;top:982px;width:19px;height:19px;" viewBox="0 0 24 24"><path fill="#f2f2f2" d="M14,3V5H17.59L7.76,14.83L9.17,16.24L19,6.41V10H21V3M19,19H5V5H12V3H5C3.89,3 3,3.9 3,5V19A2,2 0 0,0 5,21H19A2,2 0 0,0 21,19V12H19V19Z"/></svg>
<div class="t" style="top:985.84px;font-size:12px;color:#fff;left:97px;">Logs</div>
<svg style="position:absolute;left:1892px;top:980px;width:24px;height:24px;" viewBox="0 0 24 24"><path fill="#888888" d="M7.41,8.58L12,13.17L16.59,8.58L18,10L12,16L6,10L7.41,8.58Z"/></svg>
<svg style="position:absolute;left:1898.6px;top:941.6px;width:16.8px;height:16.8px;filter:drop-shadow(0 1px 1.5px rgba(0,0,0,.5));" viewBox="0 0 24 24"><path fill="#b8ee00" d="M13,9H11V7H13M13,17H11V11H13M12,2A10,10 0 0,0 2,12A10,10 0 0,0 12,22A10,10 0 0,0 22,12A10,10 0 0,0 12,2Z"/></svg>
<div style="position:absolute;left:1751px;top:1002px;width:120px;height:60px;border-radius:22px;background:#adff2f;box-shadow:0 0 5px 1px rgba(120,230,30,.7)"></div>
<div class="t" style="top:1017.15px;font-size:14px;color:#101010;left:1611px;width:400px;text-align:center;-webkit-text-stroke:0.45px #101010;">Connected</div>
</div>
</body>
</html>
